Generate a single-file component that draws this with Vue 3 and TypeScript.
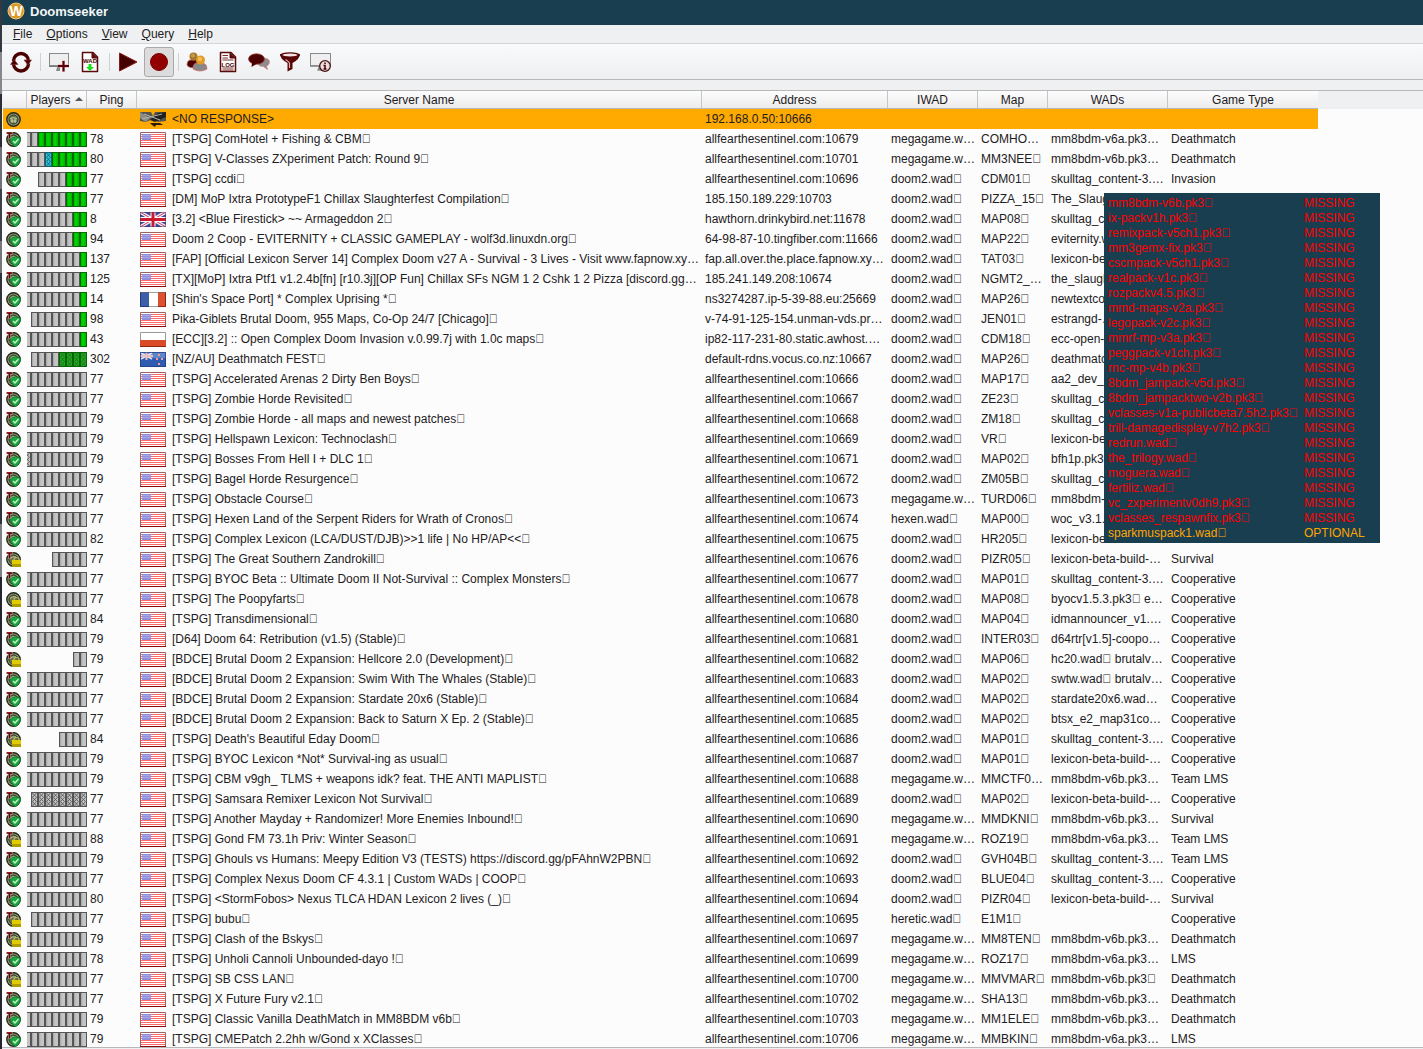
<script setup lang="ts">
interface Server {
  team: boolean
  state: 'ok' | 'lock' | 'none'
  slots: string
  flag: string
  ping: string
  name: string
  address: string
  iwad: string
  map: string
  wads: string
  type: string
}

const menus = ['File', 'Options', 'View', 'Query', 'Help']

// Trailing control character in server strings; the font has no glyph for it
const BOX = '\uE000'
const boxed = (text: string) => text.replaceAll('□', BOX)

// Slot codes: "." empty, "g" human, "s" spectator, "b" bot, "x" empty bot slot
const FULL = '.........'
const HOST = 'allfearthesentinel.com:'
const D2 = 'doom2.wad□'
const MG = 'megagame.w…'
const LEX = 'lexicon-beta-build-…'
const SKULL = 'skulltag_content-3.…'
const V6A = 'mm8bdm-v6a.pk3…'
const V6B = 'mm8bdm-v6b.pk3…'

function row(
  icon: string, slots: string, flag: string, ping: string, name: string,
  address: string, iwad: string, map: string, wads: string, type: string,
): Server {
  return {
    team: icon.startsWith('T'),
    state: icon.endsWith('L') ? 'lock' : icon.endsWith('N') ? 'none' : 'ok',
    slots, flag, ping,
    name: boxed(name),
    address: /^\d{5}$/.test(address) ? HOST + address : address,
    iwad: boxed(iwad),
    map: boxed(map),
    wads: boxed(wads),
    type,
  }
}

const servers: Server[] = [
  row('N', '', 'none', '', '<NO RESPONSE>', '192.168.0.50:10666', '', '', '', ''),
  row('T', '..ggggggg', 'us', '78', '[TSPG] ComHotel + Fishing & CBM□', '10679', MG, 'COMHO…', V6A, 'Deathmatch'),
  row('T', '...sggggg', 'us', '80', '[TSPG] V-Classes ZXperiment Patch: Round 9□', '10701', MG, 'MM3NEE□', V6B, 'Deathmatch'),
  row('T', '....ggg', 'us', '77', '[TSPG] ccdi□', '10696', D2, 'CDM01□', SKULL, 'Invasion'),
  row('T', '......ggg', 'us', '77', '[DM] MoP Ixtra PrototypeF1 Chillax Slaughterfest Compilation□', '185.150.189.229:10703', D2, 'PIZZA_15□', 'The_Slaughterf…', ''),
  row('T', '.......gg', 'gb', '8', '[3.2] <Blue Firestick> ~~ Armageddon 2□', 'hawthorn.drinkybird.net:11678', D2, 'MAP08□', SKULL, ''),
  row('P', '.......gg', 'us', '94', 'Doom 2 Coop - EVITERNITY + CLASSIC GAMEPLAY - wolf3d.linuxdn.org□', '64-98-87-10.tingfiber.com:11666', D2, 'MAP22□', 'eviternity.wad□', ''),
  row('T', '........g', 'us', '137', '[FAP] [Official Lexicon Server 14] Complex Doom v27 A - Survival - 3 Lives - Visit www.fapnow.xy…', 'fap.all.over.the.place.fapnow.xy…', D2, 'TAT03□', LEX, ''),
  row('T', '........g', 'us', '125', '[TX][MoP] Ixtra Ptf1 v1.2.4b[fn] [r10.3j][OP Fun] Chillax SFs NGM 1 2 Cshk 1 2 Pizza [discord.gg…', '185.241.149.208:10674', D2, 'NGMT2_…', 'the_slaughter…', ''),
  row('P', '........g', 'fr', '14', "[Shin's Space Port] * Complex Uprising *□", 'ns3274287.ip-5-39-88.eu:25669', D2, 'MAP26□', 'newtextcolor…', ''),
  row('T', '.......g', 'us', '98', 'Pika-Giblets Brutal Doom, 955 Maps, Co-Op 24/7 [Chicago]□', 'v-74-91-125-154.unman-vds.pr…', D2, 'JEN01□', 'estrangd-…', ''),
  row('T', '........g', 'pl', '43', '[ECC][3.2] :: Open Complex Doom Invasion v.0.99.7j with 1.0c maps□', 'ip82-117-231-80.static.awhost.…', D2, 'CDM18□', 'ecc-open-…', ''),
  row('P', '....bbbb', 'nz', '302', '[NZ/AU] Deathmatch FEST□', 'default-rdns.vocus.co.nz:10667', D2, 'MAP26□', 'deathmatch…', ''),
  row('T', FULL, 'us', '77', '[TSPG] Accelerated Arenas 2 Dirty Ben Boys□', '10666', D2, 'MAP17□', 'aa2_dev_…', ''),
  row('T', FULL, 'us', '77', '[TSPG] Zombie Horde Revisited□', '10667', D2, 'ZE23□', SKULL, ''),
  row('T', FULL, 'us', '79', '[TSPG] Zombie Horde - all maps and newest patches□', '10668', D2, 'ZM18□', SKULL, ''),
  row('T', FULL, 'us', '79', '[TSPG] Hellspawn Lexicon: Technoclash□', '10669', D2, 'VR□', LEX, ''),
  row('T', 'x........', 'us', '79', '[TSPG] Bosses From Hell I + DLC 1□', '10671', D2, 'MAP02□', 'bfh1p.pk3□', ''),
  row('T', FULL, 'us', '79', '[TSPG] Bagel Horde Resurgence□', '10672', D2, 'ZM05B□', SKULL, ''),
  row('T', FULL, 'us', '77', '[TSPG] Obstacle Course□', '10673', MG, 'TURD06□', V6B, ''),
  row('T', FULL, 'us', '77', '[TSPG] Hexen Land of the Serpent Riders for Wrath of Cronos□', '10674', 'hexen.wad□', 'MAP00□', 'woc_v3.1.…', ''),
  row('T', FULL, 'us', '82', '[TSPG] Complex Lexicon (LCA/DUST/DJB)>>1 life | No HP/AP<<□', '10675', D2, 'HR205□', LEX, ''),
  row('TL', '.....', 'us', '77', '[TSPG] The Great Southern Zandrokill□', '10676', D2, 'PIZR05□', LEX, 'Survival'),
  row('T', FULL, 'us', '77', '[TSPG] BYOC Beta :: Ultimate Doom II Not-Survival :: Complex Monsters□', '10677', D2, 'MAP01□', SKULL, 'Cooperative'),
  row('L', FULL, 'us', '77', '[TSPG] The Poopyfarts□', '10678', D2, 'MAP08□', 'byocv1.5.3.pk3□ e…', 'Cooperative'),
  row('T', FULL, 'us', '84', '[TSPG] Transdimensional□', '10680', D2, 'MAP04□', 'idmannouncer_v1.…', 'Cooperative'),
  row('T', FULL, 'us', '79', '[D64] Doom 64: Retribution (v1.5) (Stable)□', '10681', D2, 'INTER03□', 'd64rtr[v1.5]-coopo…', 'Cooperative'),
  row('TL', '..', 'us', '79', '[BDCE] Brutal Doom 2 Expansion: Hellcore 2.0 (Development)□', '10682', D2, 'MAP06□', 'hc20.wad□ brutalv…', 'Cooperative'),
  row('T', FULL, 'us', '77', '[BDCE] Brutal Doom 2 Expansion: Swim With The Whales (Stable)□', '10683', D2, 'MAP02□', 'swtw.wad□ brutalv…', 'Cooperative'),
  row('T', FULL, 'us', '77', '[BDCE] Brutal Doom 2 Expansion: Stardate 20x6 (Stable)□', '10684', D2, 'MAP02□', 'stardate20x6.wad…', 'Cooperative'),
  row('T', FULL, 'us', '77', '[BDCE] Brutal Doom 2 Expansion: Back to Saturn X Ep. 2 (Stable)□', '10685', D2, 'MAP02□', 'btsx_e2_map31co…', 'Cooperative'),
  row('TL', '....', 'us', '84', "[TSPG] Death's Beautiful Eday Doom□", '10686', D2, 'MAP01□', SKULL, 'Cooperative'),
  row('T', FULL, 'us', '79', '[TSPG] BYOC Lexicon *Not* Survival-ing as usual□', '10687', D2, 'MAP01□', LEX, 'Cooperative'),
  row('T', FULL, 'us', '79', '[TSPG] CBM v9gh_ TLMS + weapons idk? feat. THE ANTI MAPLIST□', '10688', MG, 'MMCTF0…', V6B, 'Team LMS'),
  row('T', 'xxxxxxxx', 'us', '77', '[TSPG] Samsara Remixer Lexicon Not Survival□', '10689', D2, 'MAP02□', LEX, 'Cooperative'),
  row('T', FULL, 'us', '77', '[TSPG] Another Mayday + Randomizer! More Enemies Inbound!□', '10690', MG, 'MMDKNI□', V6B, 'Survival'),
  row('TL', FULL, 'us', '88', '[TSPG] Gond FM 73.1h Priv: Winter Season□', '10691', MG, 'ROZ19□', V6A, 'Team LMS'),
  row('T', FULL, 'us', '79', '[TSPG] Ghouls vs Humans: Meepy Edition V3 (TESTS) https://discord.gg/pFAhnW2PBN□', '10692', D2, 'GVH04B□', SKULL, 'Team LMS'),
  row('T', FULL, 'us', '77', '[TSPG] Complex Nexus Doom CF 4.3.1 | Custom WADs | COOP□', '10693', D2, 'BLUE04□', SKULL, 'Cooperative'),
  row('T', FULL, 'us', '80', '[TSPG] <StormFobos> Nexus TLCA HDAN Lexicon 2 lives (_)□', '10694', D2, 'PIZR04□', LEX, 'Survival'),
  row('TL', '........', 'us', '77', '[TSPG] bubu□', '10695', 'heretic.wad□', 'E1M1□', '', 'Cooperative'),
  row('TL', FULL, 'us', '79', '[TSPG] Clash of the Bskys□', '10697', MG, 'MM8TEN□', V6B, 'Deathmatch'),
  row('T', FULL, 'us', '78', '[TSPG] Unholi Cannoli Unbounded-dayo !□', '10699', MG, 'ROZ17□', V6A, 'LMS'),
  row('TL', FULL, 'us', '77', '[TSPG] SB CSS LAN□', '10700', MG, 'MMVMAR□', 'mm8bdm-v6b.pk3□', 'Deathmatch'),
  row('T', FULL, 'us', '77', '[TSPG] X Future Fury v2.1□', '10702', MG, 'SHA13□', V6B, 'Deathmatch'),
  row('T', FULL, 'us', '79', '[TSPG] Classic Vanilla DeathMatch in MM8BDM v6b□', '10703', MG, 'MM1ELE□', V6B, 'Deathmatch'),
  row('T', FULL, 'us', '79', '[TSPG] CMEPatch 2.2hh w/Gond x XClasses□', '10706', MG, 'MMBKIN□', V6A, 'LMS'),
]

const missing = [
  'mm8bdm-v6b.pk3', 'ix-packv1h.pk3', 'remixpack-v5ch1.pk3', 'mm3gemx-fix.pk3',
  'cscmpack-v5ch1.pk3', 'realpack-v1c.pk3', 'rozpackv4.5.pk3', 'mmd-maps-v2a.pk3',
  'legopack-v2c.pk3', 'mmrf-mp-v3a.pk3', 'peggpack-v1ch.pk3', 'rnc-mp-v4b.pk3',
  '8bdm_jampack-v5d.pk3', '8bdm_jampacktwo-v2b.pk3', 'vclasses-v1a-publicbeta7.5h2.pk3',
  'trill-damagedisplay-v7h2.pk3', 'redrun.wad', 'the_trilogy.wad', 'moguera.wad',
  'fertiliz.wad', 'vc_zxperimentv0dh9.pk3', 'vclasses_respawnfix.pk3',
]

const slotClass: Record<string, string> = {
  '.': 'empty', g: 'human', s: 'spectator', b: 'bot', x: 'empty',
}
</script>

<template>
  <div class="desktop">
    <div class="window">
      <header class="titlebar">
        <svg width="18" height="18" viewBox="0 0 18 18" aria-hidden="true">
          <circle cx="9" cy="9" r="8" fill="#d99a2b" stroke="#f0c67a" stroke-width="1" />
          <text x="9" y="14" text-anchor="middle" class="logo-letter">W</text>
        </svg>
        <span>Doomseeker</span>
      </header>

      <nav class="menubar">
        <button v-for="m in menus" :key="m" type="button"><u>{{ m[0] }}</u>{{ m.slice(1) }}</button>
      </nav>

      <div class="toolbar" role="toolbar">
        <button type="button" aria-label="Refresh">
          <svg width="22" height="22" viewBox="0 0 22 22">
            <path d="M3.500 10 A7.500 7.500 0 0 1 18.500 10 M18.500 12.500 A7.500 7.500 0 0 1 3.500 12.500" fill="none" stroke="#4a0000" stroke-width="3.400" />
            <path d="M0.500 13.500 L8 13.500 L4 8.500 Z M14 9 L21.500 9 L18 14 Z" fill="#4a0000" stroke="#8a3030" stroke-width="0.600" stroke-linejoin="round" />
          </svg>
        </button>
        <i class="sep"></i>
        <button type="button" aria-label="Create game">
          <svg width="22" height="22" viewBox="0 0 22 22">
            <rect x="1.500" y="2.500" width="19" height="12" fill="#efefef" stroke="#8a8a8a" />
            <path d="M1 15.500 H21" stroke="#777" stroke-width="1" />
            <path d="M8 20 L9.500 15 H12 V20 Z" fill="#888" />
            <path d="M15.500 9.500 V20.500 M10 15 H21" stroke="#d9a5a5" stroke-width="3" />
            <path d="M15.500 10 V20.500 M10 15 H21" stroke="#5a0006" stroke-width="2" />
          </svg>
        </button>
        <button type="button" aria-label="WAD download">
          <svg width="22" height="22" viewBox="0 0 22 22">
            <path d="M3.500 1.500 H14 L18.500 6 V20.500 H3.500 Z" fill="#fff" stroke="#5a0a0a" stroke-width="1.500" stroke-linejoin="round" />
            <path d="M13 1.500 V7 H18.500" fill="#5a0a0a" stroke="#5a0a0a" />
            <text x="11" y="12" text-anchor="middle" class="doc-letters">WAD</text>
            <path d="M9.500 13 H12.500 V16 H15 L11 20 L7 16 H9.500 Z" fill="#18e018" />
          </svg>
        </button>
        <i class="sep"></i>
        <button type="button" aria-label="Play">
          <svg width="22" height="22" viewBox="0 0 22 22">
            <path d="M2.500 2 L20 11 L2.500 20 Z" fill="#450000" stroke="#8b1a1a" stroke-width="1" stroke-linejoin="round" />
          </svg>
        </button>
        <button type="button" class="checked" aria-label="Record" aria-pressed="true">
          <svg width="22" height="22" viewBox="0 0 22 22">
            <circle cx="11" cy="11" r="8.500" fill="#930000" stroke="#7a0000" />
          </svg>
        </button>
        <i class="sep"></i>
        <button type="button" aria-label="Buddies">
          <svg width="22" height="22" viewBox="0 0 22 22">
            <path d="M1 14 Q1 9 5 9 H11 V16 Q3 18 1 14 Z" fill="#4a0000" stroke="#c06060" stroke-width="0.700" />
            <circle cx="7.500" cy="5.500" r="4" fill="#a8782a" />
            <circle cx="7" cy="4.500" r="2" fill="#c69a4c" />
            <path d="M7 18 Q7 12 11 12 H17 Q21 13 21 18 Q14 22 7 18 Z" fill="#888" stroke="#d06a6a" stroke-width="0.800" />
            <circle cx="14.500" cy="9" r="4.500" fill="#e09a26" />
            <circle cx="14" cy="8" r="2.200" fill="#f6bd58" />
          </svg>
        </button>
        <button type="button" aria-label="Log">
          <svg width="22" height="22" viewBox="0 0 22 22">
            <path d="M3.500 1.500 H14 L18.500 6 V20.500 H3.500 Z" fill="#fff" stroke="#5a0a0a" stroke-width="1.500" stroke-linejoin="round" />
            <path d="M13 1.500 V7 H18.500" fill="#5a0a0a" stroke="#5a0a0a" />
            <path d="M5.500 4.500 H11 M5.500 7 H11 M5.500 9 H16.500 M5.500 17 H16.500 M5.500 19 H16.500" stroke="#7a3030" stroke-width="1" />
            <text x="11" y="15.500" text-anchor="middle" class="doc-letters">LOG</text>
          </svg>
        </button>
        <button type="button" aria-label="Chat">
          <svg width="22" height="22" viewBox="0 0 22 22">
            <path d="M12 8 Q20 6 21.300 10 Q22 13.500 18.500 15 L19.500 18.500 L15.500 15.500 Q11 15.500 10 13 Z" fill="#8c8c8c" stroke="#d08080" stroke-width="0.800" />
            <ellipse cx="8.500" cy="8" rx="8" ry="5.200" fill="#4a0000" stroke="#a04040" stroke-width="0.800" />
            <path d="M4 11.500 L3.500 16 L9 12.500 Z" fill="#4a0000" />
          </svg>
        </button>
        <button type="button" aria-label="Filter">
          <svg width="22" height="22" viewBox="0 0 22 22">
            <path d="M1 3 Q1 8 8.500 12 V20.500 L13.500 18 V12 Q21 8 21 3 Z" fill="#5a0505" />
            <ellipse cx="11" cy="4" rx="10" ry="2.800" fill="#5a0505" />
            <ellipse cx="11" cy="4" rx="7.500" ry="1.500" fill="#efe3e3" />
            <path d="M6.500 8.500 Q9 10 10.500 12 V17" fill="none" stroke="#d9b5b5" stroke-width="1.200" />
          </svg>
        </button>
        <button type="button" aria-label="Server details">
          <svg width="22" height="22" viewBox="0 0 22 22">
            <rect x="0.500" y="2.500" width="20" height="12" fill="#efefef" stroke="#8a8a8a" />
            <path d="M0 15.500 H21" stroke="#999" />
            <path d="M7 19.500 L9 15 H12 V20 Z" fill="#888" />
            <circle cx="15" cy="15" r="5.300" fill="#e8dede" stroke="#4a1010" stroke-width="1.300" />
            <path d="M15 11.500 V13 M13.500 14.500 H15 V18 M13.500 18 H16.500" fill="none" stroke="#4a0000" stroke-width="1.500" />
          </svg>
        </button>
      </div>

      <main class="list">
        <table class="servers">
          <colgroup>
            <col class="c-icon" /><col class="c-players" /><col class="c-ping" /><col />
            <col class="c-address" /><col class="c-iwad" /><col class="c-map" />
            <col class="c-wads" /><col class="c-type" />
          </colgroup>
          <thead>
            <tr>
              <th></th>
              <th aria-sort="ascending">Players<i class="arrow"></i></th>
              <th>Ping</th>
              <th>Server Name</th>
              <th>Address</th>
              <th>IWAD</th>
              <th>Map</th>
              <th>WADs</th>
              <th>Game Type</th>
            </tr>
          </thead>
          <tbody>
            <tr v-for="s in servers" :key="s.address + s.name" :class="{ selected: s.state === 'none' }">
              <td>
                <svg class="status" width="15" height="15" viewBox="0 0 15 15" aria-hidden="true">
                  <circle cx="7.500" cy="7.500" r="6.700" fill="#98a67c" stroke="#23281a" stroke-width="1.400" />
                  <circle cx="7.500" cy="7.500" r="4.600" fill="#66734c" stroke="#2b3320" />
                  <path v-if="s.state === 'none'" d="M4 7 Q7.500 4.500 11 7 M4.500 9 H10.500 M6 7 V11 M9 7 V11" fill="none" stroke="#c2d0a4" stroke-width="1.200" />
                  <path v-else d="M4 6.500 Q6.500 4 10 5" fill="none" stroke="#c2d0a4" />
                  <g v-if="s.state === 'ok'">
                    <path d="M9.500 4.500 L14.500 6 Q14.500 12 9.500 14.500 Q4.500 12 4.500 6.500 Z" fill="#18a840" stroke="#0c6e26" stroke-width="0.600" />
                    <path d="M7 9 L9 11 L12.500 7" fill="none" stroke="#c4f0c8" stroke-width="1.400" />
                  </g>
                  <g v-if="s.state === 'lock'">
                    <path d="M8 8.500 V7 Q10.500 4 13 7 V8.500" fill="none" stroke="#c9b65a" stroke-width="1.200" />
                    <rect x="6" y="8" width="9" height="7" fill="#e0cc00" />
                    <rect x="6" y="12" width="9" height="3" fill="#b09c00" />
                  </g>
                  <path v-if="s.team" d="M0.500 0 H6.500 V2 H4.500 V6.500 H2.500 V2 H0.500 Z" fill="#6a0006" stroke="#d8c8c0" stroke-width="0.400" />
                </svg>
              </td>
              <td class="players">
                <div class="bar">
                  <span v-for="(c, i) in s.slots.split('')" :key="i" class="slot" :class="slotClass[c]">
                    <svg v-if="'sbx'.includes(c)" width="5" height="13" viewBox="0 0 5 13" aria-hidden="true">
                      <path d="M0.500 0 L4.500 4.300 L0.500 8.600 L4.500 13 M4.500 0 L0.500 4.300 L4.500 8.600 L0.500 13" fill="none" stroke="currentColor" stroke-width="0.900" />
                    </svg>
                  </span>
                </div>
              </td>
              <td>{{ s.ping }}</td>
              <td>
                <svg v-if="s.flag === 'none'" class="flag" width="26" height="15" viewBox="0 0 26 15" aria-hidden="true">
                  <path d="M0 0 H11 L13 4 L15 0 H26 V9 L18 10 L13 7 L6 10 L0 9 Z" fill="#55554f" />
                  <path d="M0 0 L10 6 L6 10 L0 6 Z" fill="#8c8c88" />
                  <path d="M26 0 L18 1 L10 8 L15 10 L26 5 Z" fill="#20201c" />
                  <path d="M2 7 L22 2 M4 2 L20 8" stroke="#b4b4ac" stroke-width="1" />
                  <path d="M10 11 H20 L23 13 H16 L15 15 L12 13 Z" fill="#2a1c08" />
                </svg>
                <svg v-else class="flag" width="26" height="15" viewBox="0 0 26 15" aria-hidden="true">
                  <g v-if="s.flag === 'us'">
                    <rect width="26" height="15" fill="#fff" />
                    <path d="M1 2.500 H25 M1 4.500 H25 M1 6.500 H25 M1 8.500 H25 M1 10.500 H25 M1 12.500 H25" stroke="#fa6a6a" stroke-width="1" />
                    <rect x="2" y="2" width="9" height="6" fill="#8f8fdc" />
                    <path d="M2.500 3.500 H11 M2.500 5.500 H11" stroke="#c0c0f4" stroke-dasharray="1 1" />
                    <path d="M0.500 15 V0.500 H25.500 V15" fill="none" stroke="#9c6464" />
                    <path d="M0 14.500 H26" stroke="#8c0c0c" />
                  </g>
                  <g v-else-if="s.flag === 'gb'">
                    <rect width="26" height="15" fill="#3a4a98" />
                    <path d="M0 0 L26 15 M26 0 L0 15" stroke="#eef" stroke-width="3.500" />
                    <path d="M0 0 L26 15 M26 0 L0 15" stroke="#d83a4a" stroke-width="1" />
                    <path d="M13 0 V15 M0 7.500 H26" stroke="#fff" stroke-width="5" />
                    <path d="M13 0 V15 M0 7.500 H26" stroke="#cc1a30" stroke-width="3" />
                    <rect x="0.500" y="0.500" width="25" height="14" fill="none" stroke="#503060" stroke-opacity="0.500" />
                  </g>
                  <g v-else-if="s.flag === 'fr'">
                    <rect width="9" height="15" fill="#3c5fa8" />
                    <rect x="9" width="9" height="15" fill="#fff" />
                    <rect x="18" width="8" height="15" fill="#dd5030" />
                    <path d="M0.500 0 V14.500 H9" fill="none" stroke="#1f3c80" />
                    <path d="M25.500 0 V14.500 H18" fill="none" stroke="#8f2410" />
                    <path d="M0 0.500 H26 M9 14.500 H18" stroke="#666" stroke-opacity="0.600" />
                  </g>
                  <g v-else-if="s.flag === 'pl'">
                    <rect width="26" height="8" fill="#fff" />
                    <rect y="8" width="26" height="7" fill="#d84a28" />
                    <path d="M0.500 8 V0.500 H25.500 V8" fill="none" stroke="#999" />
                    <path d="M0 14.500 H26" stroke="#8f2410" />
                  </g>
                  <g v-else>
                    <rect width="26" height="15" fill="#2f5bb0" />
                    <rect width="26" height="6" fill="#5f86c8" />
                    <path d="M1 1 L12 7 M12 1 L1 7" stroke="#e8e0f0" stroke-width="1.500" />
                    <path d="M6.500 0 V8 M0 4 H13" stroke="#e9c0c0" stroke-width="2" />
                    <path d="M19 2 V4 M16 7 H18 M22 6 V8 M19 11 V13" stroke="#f0a0a0" stroke-width="2" />
                    <rect x="0.500" y="0.500" width="25" height="14" fill="none" stroke="#1a3a80" stroke-opacity="0.700" />
                  </g>
                </svg>
                <span>{{ s.name }}</span>
              </td>
              <td>{{ s.address }}</td>
              <td>{{ s.iwad }}</td>
              <td>{{ s.map }}</td>
              <td>{{ s.wads }}</td>
              <td>{{ s.type }}</td>
            </tr>
          </tbody>
        </table>
      </main>
    </div>

    <div class="tooltip" role="tooltip">
      <table>
        <tbody>
          <tr v-for="m in missing" :key="m">
            <td>{{ m + BOX }}</td>
            <td>MISSING</td>
          </tr>
          <tr class="optional">
            <td>{{ 'sparkmuspack1.wad' + BOX }}</td>
            <td>OPTIONAL</td>
          </tr>
        </tbody>
      </table>
    </div>
  </div>
</template>

<style>
body {
  overflow: hidden;
}
</style>

<style scoped>
.desktop {
  position: relative;
  box-sizing: border-box;
  height: 100vh;
  padding-left: 2px;
  background: linear-gradient(#34383f 0 5%, #85878c 5% 9%, #2b2e35 9% 14%, #6f7278 14% 18%, #3c4048 18% 23%, #74777c 23% 26%, #2f333a 26% 50%, #7c7f84 50% 55%, #23262e 55%);
  font-family: "Liberation Sans", Arial, sans-serif;
  font-size: 12px;
  color: #1d2022;
}
.window {
  display: flex;
  flex-direction: column;
  height: 100%;
  background: #eff0f1;
}
.titlebar {
  display: flex;
  align-items: center;
  flex: none;
  gap: 5px;
  height: 22px;
  padding: 0 5px 3px;
  background: #193e4f;
  color: #f4f6f7;
  font-size: 13px;
  font-weight: bold;
}
.logo-letter {
  font-size: 14px;
  font-weight: bold;
  fill: #fff;
}
.doc-letters {
  font-size: 6px;
  font-weight: bold;
  fill: #4a0000;
}
button {
  margin: 0;
  border: 0;
  background: none;
  font: inherit;
  color: inherit;
}
.menubar {
  display: flex;
  flex: none;
  height: 18px;
  padding-left: 4px;
  border-bottom: 1px solid #d3d5d6;
}
.menubar button {
  padding: 0 7px;
  line-height: 18px;
}
.toolbar {
  display: flex;
  flex: none;
  gap: 1px;
  padding: 3px 4px 2px;
  background: linear-gradient(#f9fafb, #eeeff0);
  border-bottom: 1px solid #b6b8ba;
}
.toolbar button {
  display: grid;
  place-items: center;
  box-sizing: border-box;
  width: 30px;
  height: 30px;
  padding: 0;
}
.toolbar .checked {
  background: #dcdcdc;
  border: 1px solid #a9a9a9;
  border-radius: 3px;
}
.sep {
  width: 6px;
  height: 18px;
  margin-top: 6px;
  background: linear-gradient(90deg, transparent 3px, #cfd0d1 3px 4px, transparent 4px);
}
.list {
  flex: 1;
  min-height: 0;
  margin: 10px 0 1px;
  padding: 0 105px 0 1px;
  overflow: hidden;
  border-top: 1px solid #b6b8ba;
  border-bottom: 1px solid #b6b8ba;
  background: linear-gradient(#eff0f1 18px, #fcfcfc 18px);
}
table {
  border-spacing: 0;
}
.servers {
  width: 100%;
  table-layout: fixed;
}
.c-icon { width: 24px; }
.c-players { width: 60px; }
.c-ping { width: 50px; }
.c-address { width: 186px; }
.c-iwad { width: 90px; }
.c-map { width: 70px; }
.c-wads { width: 120px; }
.c-type { width: 150px; }
th {
  box-sizing: border-box;
  height: 18px;
  padding: 1px 0 0;
  border-right: 1px solid #c4c5c6;
  border-bottom: 1px solid #b6b8ba;
  background: linear-gradient(#fdfdfd, #ececed);
  font-weight: normal;
  line-height: 16px;
  white-space: nowrap;
}
th:last-child {
  border-right: 0;
}
.arrow {
  display: inline-block;
  margin: 0 0 3px 4px;
  border: 4px solid transparent;
  border-top: 0;
  border-bottom-color: #55585a;
}
.servers td {
  height: 20px;
  padding: 0 0 0 3px;
  overflow: hidden;
  line-height: 20px;
  white-space: nowrap;
}
.servers .players {
  padding: 0;
}
.selected {
  background: #ffaa00;
}
.status {
  display: block;
  margin-top: 1px;
}
.bar {
  display: flex;
  justify-content: flex-end;
  width: 60px;
  margin-top: 1px;
  overflow: hidden;
}
.slot {
  flex: none;
  box-sizing: border-box;
  width: 7px;
  height: 15px;
  border: 1px solid #555;
}
.slot svg {
  display: block;
}
.empty {
  background: linear-gradient(90deg, #a4a4a4, #c4c4c4 2px);
  color: #5a5a5a;
}
.human {
  border-color: #066606;
  background: linear-gradient(90deg, #00b400, #00dc00 2px, #00b000);
}
.spectator {
  border-color: #0f6470;
  background: #30c4d4;
  color: #0d5c7c;
}
.bot {
  border-color: #066606;
  background: #10b410;
  color: #3f5a3f;
}
.flag {
  vertical-align: top;
  margin: 3px 6px 0 0;
}
.tooltip {
  position: absolute;
  top: 193px;
  right: 43px;
  width: 276px;
  box-sizing: border-box;
  padding: 3px 4px 2px;
  background: #193e4f;
  color: #ff0000;
}
.tooltip td {
  width: 196px;
  padding: 0;
  line-height: 15px;
  white-space: nowrap;
}
.tooltip td + td {
  width: 70px;
}
.tooltip .optional {
  color: #ffa500;
}
</style>
